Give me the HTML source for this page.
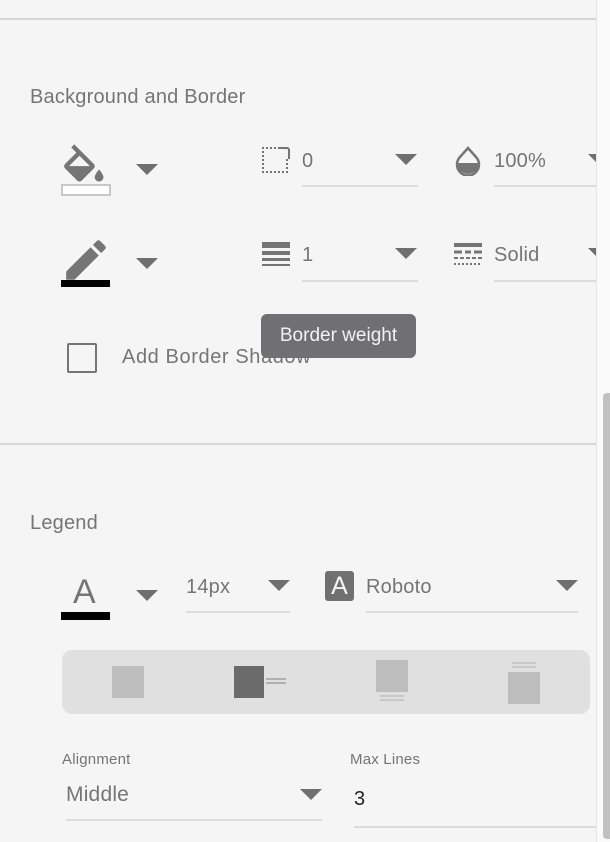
<!DOCTYPE html>
<html><head><meta charset="utf-8"><style>
*{margin:0;padding:0;box-sizing:border-box}
body{width:610px;height:842px;overflow:hidden;background:#f5f5f5;font-family:"Liberation Sans",sans-serif;position:relative;color:#757575}
#c{position:absolute;left:0;top:0;width:596px;height:842px;overflow:hidden}
.a{position:absolute}
.t{position:absolute;font-size:20px;color:#757575;white-space:nowrap;letter-spacing:0.2px}
.ul{position:absolute;height:2px;background:#dcdcdc}
.hr{position:absolute;left:0;width:596px;height:2px;background:#d6d6d6}
.tri{position:absolute;width:0;height:0;border-left:11px solid transparent;border-right:11px solid transparent;border-top:11px solid #6f6f6f}
</style></head><body>
<div class="a" style="left:596px;top:0;width:14px;height:842px;background:#fafafa;border-left:1px solid #e6e6e6"></div>
<div class="a" style="left:603px;top:393px;width:7px;height:446px;background:#c1c1c1;border-radius:4px 0 0 4px"></div>
<div id="c">
<div class="hr" style="top:18px"></div>
<div class="hr" style="top:443px"></div>

<div class="t" style="left:30px;top:86px;font-size:20px">Background and Border</div>

<svg class="a" style="left:62px;top:144px" width="48" height="40" viewBox="2 0 22 18"><path d="M16.56 8.94L7.62 0 6.21 1.41l2.38 2.38-5.15 5.15c-.59.59-.59 1.54 0 2.12l5.5 5.5c.29.29.68.44 1.06.44s.77-.15 1.06-.44l5.5-5.5c.59-.58.59-1.53 0-2.12zM5.21 10L10 5.21 14.79 10H5.21zM19 11.5s-2 2.17-2 3.5c0 1.1.9 2 2 2s2-.9 2-2c0-1.33-2-3.5-2-3.5z" fill="#757575"/></svg>
<div class="a" style="left:61px;top:184px;width:50px;height:12px;border:2px solid #c8c8c8;background:#fff"></div>
<div class="tri" style="left:136px;top:164px"></div>

<svg class="a" style="left:64px;top:238px" width="44" height="44" viewBox="2 2 20 20"><path d="M3 17.25V21h3.75L17.81 9.94l-3.75-3.75L3 17.25zM20.71 7.04c.39-.39.39-1.02 0-1.41l-2.34-2.34c-.39-.39-1.020-.39-1.41 0l-1.83 1.83 3.75 3.75 1.83-1.83z" fill="#757575"/></svg>
<div class="a" style="left:61px;top:280px;width:49px;height:7px;background:#000"></div>
<div class="tri" style="left:136px;top:258px"></div>

<div class="a" style="left:262px;top:147px;width:26px;height:26px;border:2px dotted #757575;border-top-right-radius:2px"></div>
<div class="a" style="left:278px;top:147px;width:12px;height:12px;border-top:2px solid #757575;border-right:2px solid #757575;border-top-right-radius:3px;background:#f5f5f5"></div>
<div class="t" style="left:302px;top:150px">0</div>
<div class="tri" style="left:395px;top:154px"></div>
<div class="ul" style="left:302px;top:185px;width:116px"></div>

<svg class="a" style="left:455px;top:146px" width="26" height="30" viewBox="0 0 26 30"><path d="M13 2L5 11a11 11 0 1016 0z" fill="none" stroke="#757575" stroke-width="2.5"/><path d="M2 17h22a11 11 0 01-22 0z" fill="#757575"/></svg>
<div class="t" style="left:494px;top:150px">100%</div>
<div class="tri" style="left:588px;top:154px"></div>
<div class="ul" style="left:494px;top:185px;width:102px"></div>

<svg class="a" style="left:262px;top:242px" width="28" height="26"><rect x="0" y="0" width="28" height="6" fill="#757575"/><rect x="0" y="9" width="28" height="4" fill="#757575"/><rect x="0" y="16" width="28" height="3" fill="#757575"/><rect x="0" y="22" width="28" height="2" fill="#757575"/></svg>
<div class="t" style="left:302px;top:244px">1</div>
<div class="tri" style="left:395px;top:248px"></div>
<div class="ul" style="left:302px;top:280px;width:116px"></div>

<svg class="a" style="left:454px;top:243px" width="28" height="24"><rect x="0" y="0" width="28" height="4" fill="#757575"/><path d="M0 9h8M11 9h6M20 9h8" stroke="#757575" stroke-width="3"/><path d="M0 15h4M6 15h4M12 15h4M18 15h4M24 15h4" stroke="#757575" stroke-width="2"/><path d="M0 21h2M4 21h2M8 21h2M12 21h2M16 21h2M20 21h2M24 21h2" stroke="#757575" stroke-width="2"/></svg>
<div class="t" style="left:494px;top:244px">Solid</div>
<div class="tri" style="left:588px;top:248px"></div>
<div class="ul" style="left:494px;top:280px;width:102px"></div>

<div class="a" style="left:67px;top:343px;width:30px;height:30px;border:2.5px solid #757575;border-radius:2px"></div>
<div class="t" style="left:122px;top:346px;letter-spacing:0.6px">Add Border Shadow</div>
<div class="a" style="left:261px;top:314px;width:155px;height:44px;background:#707074;border-radius:6px;color:#f2f2f2;font-size:19px;line-height:44px;text-align:center">Border weight</div>

<div class="t" style="left:30px;top:512px;font-size:20px">Legend</div>

<div class="t" style="left:73px;top:572px;font-size:34px;line-height:40px">A</div>
<div class="a" style="left:61px;top:612px;width:49px;height:8px;background:#000"></div>
<div class="tri" style="left:136px;top:590px"></div>

<div class="t" style="left:186px;top:576px">14px</div>
<div class="tri" style="left:268px;top:580px"></div>
<div class="ul" style="left:186px;top:611px;width:104px"></div>

<div class="a" style="left:325px;top:571px;width:29px;height:30px;background:#707070;border-radius:3px;color:#f5f5f5;font-size:25px;line-height:31px;text-align:center">A</div>
<div class="t" style="left:366px;top:576px">Roboto</div>
<div class="tri" style="left:556px;top:580px"></div>
<div class="ul" style="left:366px;top:611px;width:212px"></div>

<div class="a" style="left:62px;top:650px;width:528px;height:64px;background:#e0e0e0;border-radius:10px"></div>
<div class="a" style="left:112px;top:666px;width:32px;height:32px;background:#bdbdbd"></div>
<div class="a" style="left:234px;top:666px;width:30px;height:32px;background:#6b6b6b"></div>
<div class="a" style="left:266px;top:678px;width:20px;height:6px;border-top:2px solid #b0b0b0;border-bottom:2px solid #b0b0b0"></div>
<div class="a" style="left:376px;top:660px;width:32px;height:32px;background:#bdbdbd"></div>
<div class="a" style="left:380px;top:695px;width:24px;height:6px;border-top:2px solid #c8c8c8;border-bottom:2px solid #c8c8c8"></div>
<div class="a" style="left:512px;top:662px;width:24px;height:6px;border-top:2px solid #c8c8c8;border-bottom:2px solid #c8c8c8"></div>
<div class="a" style="left:508px;top:672px;width:32px;height:32px;background:#bdbdbd"></div>

<div class="t" style="left:62px;top:751px;font-size:15px">Alignment</div>
<div class="t" style="left:66px;top:783px;font-size:21px">Middle</div>
<div class="tri" style="left:300px;top:789px"></div>
<div class="ul" style="left:66px;top:819px;width:256px"></div>

<div class="t" style="left:350px;top:751px;font-size:15px">Max Lines</div>
<div class="t" style="left:354px;top:788px;color:#222">3</div>
<div class="ul" style="left:354px;top:826px;width:242px"></div>
</div>
</body></html>
